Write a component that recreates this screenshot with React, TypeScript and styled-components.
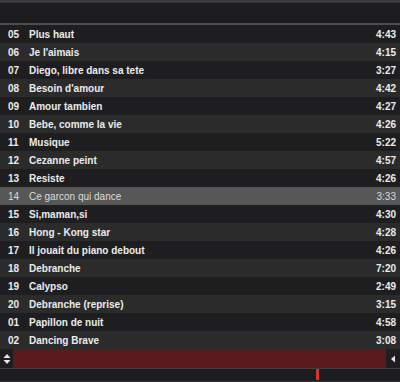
import React from "react";
import styled, { createGlobalStyle } from "styled-components";

const Global = createGlobalStyle`
  html, body { margin: 0; padding: 0; background: #1c1c1e; }
  * { box-sizing: border-box; }
`;

const Frame = styled.div`
  width: 400px;
  height: 382px;
  display: flex;
  flex-direction: column;
  background: #1c1c1e;
  font-family: "Liberation Sans", Arial, sans-serif;
  overflow: hidden;
`;

const TopEdge = styled.div`
  height: 3px;
  background: #3a3a3c;
`;

const Header = styled.div`
  height: 22px;
  background: #1d1d1f;
  border-bottom: 2px solid #4d4d4f;
`;

const List = styled.div`
  display: flex;
  flex-direction: column;
`;

const Row = styled.div<{ $alt: boolean; $sel: boolean }>`
  height: 18px;
  display: flex;
  align-items: center;
  padding: 0 4px 0 8px;
  background: ${(p) => (p.$sel ? "#575757" : p.$alt ? "#2b2b2c" : "#1e1e20")};
  color: ${(p) => (p.$sel ? "#dcdcdc" : "#ececec")};
  font-size: 10px;
  font-weight: ${(p) => (p.$sel ? 400 : 700)};
`;

const Num = styled.span`
  width: 21px;
  flex: none;
`;

const Title = styled.span`
  flex: 1;
  white-space: nowrap;
`;

const Dur = styled.span`
  flex: none;
  text-align: right;
`;

const ScrollBar = styled.div`
  height: 19px;
  display: flex;
  background: #1b1b1d;
`;

const ScrollBtn = styled.div<{ $w: number }>`
  width: ${(p) => p.$w}px;
  flex: none;
  display: flex;
  align-items: center;
  justify-content: center;
  background: #1e1e20;
`;

const Track = styled.div`
  flex: 1;
  background: #5b1b1d;
`;

const Bottom = styled.div`
  position: relative;
  flex: 1;
  background: #1d1d1f;
  border-top: 1px solid #3e3e40;
  border-bottom: 1px solid #3a3a3c;
`;

const Marker = styled.div`
  position: absolute;
  left: 316px;
  top: 0;
  width: 3px;
  height: 11px;
  background: #d8302a;
`;

const tracks: [string, string, string][] = [
  ["05", "Plus haut", "4:43"],
  ["06", "Je l'aimais", "4:15"],
  ["07", "Diego, libre dans sa tete", "3:27"],
  ["08", "Besoin d'amour", "4:42"],
  ["09", "Amour tambien", "4:27"],
  ["10", "Bebe, comme la vie", "4:26"],
  ["11", "Musique", "5:22"],
  ["12", "Cezanne peint", "4:57"],
  ["13", "Resiste", "4:26"],
  ["14", "Ce garcon qui dance", "3:33"],
  ["15", "Si,maman,si", "4:30"],
  ["16", "Hong - Kong star", "4:28"],
  ["17", "Il jouait du piano debout", "4:26"],
  ["18", "Debranche", "7:20"],
  ["19", "Calypso", "2:49"],
  ["20", "Debranche (reprise)", "3:15"],
  ["01", "Papillon de nuit", "4:58"],
  ["02", "Dancing Brave", "3:08"],
];

export default function App() {
  return (
    <>
      <Global />
      <Frame>
        <TopEdge />
        <Header />
        <List>
          {tracks.map(([n, t, d], i) => (
            <Row key={i} $alt={i % 2 === 1} $sel={n === "14"}>
              <Num>{n}</Num>
              <Title>{t}</Title>
              <Dur>{d}</Dur>
            </Row>
          ))}
        </List>
        <ScrollBar>
          <ScrollBtn $w={13}>
            <svg width="8" height="12" viewBox="0 0 8 12">
              <path d="M4 1 L7.5 5 H0.5 Z" fill="#e6e6e6" />
              <path d="M4 11 L7.5 7 H0.5 Z" fill="#e6e6e6" />
            </svg>
          </ScrollBtn>
          <Track />
          <ScrollBtn $w={14}>
            <svg width="6" height="8" viewBox="0 0 6 8">
              <path d="M1 4 L5 0.5 V7.5 Z" fill="#e6e6e6" />
            </svg>
          </ScrollBtn>
        </ScrollBar>
        <Bottom>
          <Marker />
        </Bottom>
      </Frame>
    </>
  );
}
